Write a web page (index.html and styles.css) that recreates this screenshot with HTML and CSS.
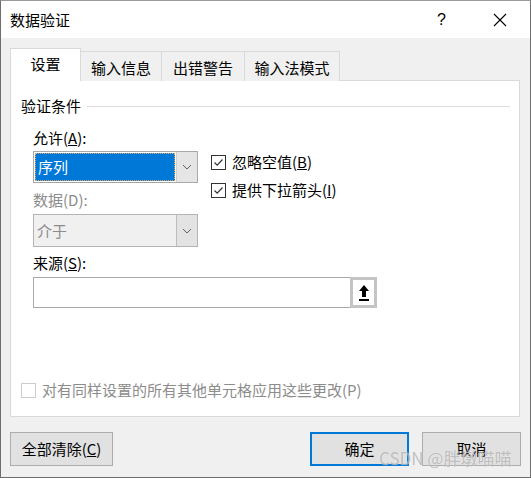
FILE: index.html
```html
<!DOCTYPE html>
<html lang="zh-CN">
<head>
<meta charset="utf-8">
<title>数据验证</title>
<link rel="stylesheet" href="styles.css">
</head>
<body>
<div class="dialog">
  <div class="titlebar">
    <span class="title">数据验证</span>
    <span class="help">?</span>
    <svg class="close" width="14" height="14" viewBox="0 0 14 14"><path d="M1 1L13 13M13 1L1 13" stroke="#000" stroke-width="1.1" fill="none"/></svg>
  </div>
  <div class="content">
    <div class="tabs">
      <div class="tab active">设置</div>
      <div class="tab">输入信息</div>
      <div class="tab">出错警告</div>
      <div class="tab">输入法模式</div>
    </div>
    <div class="panel">
      <div class="legend"><span>验证条件</span><span class="rule"></span></div>
      <div class="form">
        <div class="label">允许(<u>A</u>):</div>
        <div class="grid">
          <div class="leftcol">
            <div class="combo">
              <div class="combo-text selected"><span class="focus">序列</span></div>
              <div class="combo-btn"><svg width="10" height="6" viewBox="0 0 10 6"><path d="M1 1L5 5L9 1" stroke="#606060" fill="none"/></svg></div>
            </div>
            <div class="label disabled lbl-data">数据(D):</div>
            <div class="combo disabled-combo">
              <div class="combo-text">介于</div>
              <div class="combo-btn"><svg width="10" height="6" viewBox="0 0 10 6"><path d="M1 1L5 5L9 1" stroke="#606060" fill="none"/></svg></div>
            </div>
          </div>
          <div class="rightcol">
            <div class="check"><span class="box"><svg width="13" height="13" viewBox="0 0 13 13"><path d="M2.5 6.5L5.2 9.2L10.5 3.5" stroke="#333" stroke-width="1.2" fill="none"/></svg></span><span>忽略空值(<u>B</u>)</span></div>
            <div class="check"><span class="box"><svg width="13" height="13" viewBox="0 0 13 13"><path d="M2.5 6.5L5.2 9.2L10.5 3.5" stroke="#333" stroke-width="1.2" fill="none"/></svg></span><span>提供下拉箭头(<u>I</u>)</span></div>
          </div>
        </div>
        <div class="label lbl-src">来源(<u>S</u>):</div>
        <div class="source">
          <div class="source-input"></div>
          <div class="source-btn"><svg width="14" height="18" viewBox="0 0 14 18"><path d="M7 1L12 7H9V13H5V7H2Z" fill="#000"/><rect x="2" y="15" width="10" height="2" fill="#000"/></svg></div>
        </div>
      </div>
      <div class="check bottom-check"><span class="box box-disabled"></span><span class="disabled">对有同样设置的所有其他单元格应用这些更改(P)</span></div>
    </div>
    <div class="footer">
      <div class="btn btn-wide">全部清除(<u>C</u>)</div>
      <div class="spacer"></div>
      <div class="btn btn-default">确定</div>
      <div class="btn">取消</div>
    </div>
  </div>
  <div class="watermark">CSDN @胖墩喵喵</div>
</div>
</body>
</html>
```
FILE: styles.css
```css
* { box-sizing: border-box; }
html, body { margin: 0; padding: 0; }
body {
  font-family: "Noto Sans CJK SC", "Noto Sans", sans-serif;
  font-size: 15px;
  color: #000;
  background: #f0f0f0;
}
.dialog {
  position: relative;
  width: 531px;
  height: 478px;
  border: 1px solid #6e6e6e;
  border-top-color: #9a9a9a;
  background: #f0f0f0;
  overflow: hidden;
}
.titlebar {
  height: 37px;
  background: #fff;
  display: flex;
  align-items: center;
  padding-left: 9px;
}
.title { font-size: 15px; line-height: 20px; flex: 1; }
.help { width: 14px; margin-right: 42px; font-family: "Liberation Sans", sans-serif; font-size: 16px; }
.close { margin-right: 23px; }
.content { padding: 10px 9px 0 9px; }
.tabs { display: flex; align-items: flex-end; height: 33px; position: relative; z-index: 1; margin-bottom: -1px; }
.tab {
  height: 30px;
  border: 1px solid #d9d9d9;
  border-bottom: none;
  border-left: none;
  background: #f0f0f0;
  display: flex;
  align-items: center;
  justify-content: center;
  line-height: 20px;
  padding-top: 2px;
}
.tab:nth-child(2) { width: 81px; }
.tab:nth-child(3) { width: 83px; }
.tab:nth-child(4) { width: 95px; }
.tab.active {
  width: 71px;
  height: 33px;
  background: #fff;
  border-left: 1px solid #d9d9d9;
  padding-top: 0;
  padding-bottom: 2px;
}
.panel {
  width: 510px;
  height: 337px;
  background: #fff;
  border: 1px solid #d9d9d9;
  padding: 15px 9px 16px 10px;
  display: flex;
  flex-direction: column;
}
.legend { display: flex; align-items: center; line-height: 20px; }
.legend .rule { flex: 1; border-top: 1px solid #dcdcdc; margin-left: 6px; }
.form { padding-left: 12px; }
.label { line-height: 20px; }
.form > .label:first-child { margin-top: 12px; }
.disabled { color: #8c8c8c; }
.lbl-data { margin-top: 7px; }
.lbl-src { margin-top: 6px; }
.grid { display: grid; grid-template-columns: 165px auto; column-gap: 13px; margin-top: 3px; }
.combo {
  display: flex;
  height: 32px;
  border: 1px solid #a9a9a9;
  background: #fff;
}
.combo-text {
  flex: 1;
  margin: 1px;
  line-height: 26px;
  padding-left: 2px;
}
.combo-text.selected { background: #0078d7; color: #fff; padding: 0; }
.focus {
  display: block;
  height: 100%;
  border: 1px dotted #e0a868;
  padding-left: 2px;
  line-height: 26px;
}
.combo-btn {
  width: 21px;
  background: #e5e5e5;
  border-left: 1px solid #cfcfcf;
  display: flex;
  align-items: center;
  justify-content: center;
}
.disabled-combo { margin-top: 4px; height: 33px; background: #f0f0f0; border-color: #b4b4b4; }
.disabled-combo .combo-text { color: #8c8c8c; line-height: 29px; padding-left: 2px; }
.disabled-combo .combo-btn { background: #e3e3e3; border-left-color: #bdbdbd; }
.rightcol { padding-top: 1px; display: flex; flex-direction: column; gap: 8px; }
.check { display: flex; align-items: center; line-height: 20px; height: 20px; }
.box {
  width: 15px;
  height: 15px;
  border: 1px solid #333;
  background: #fff;
  margin-right: 6px;
  display: flex;
  align-items: center;
  justify-content: center;
}
.box-disabled { border-color: #cccccc; }
.source { display: flex; margin-top: 4px; width: 344px; height: 31px; border: 1px solid #a9a9a9; }
.source-input { flex: 1; background: #fff; }
.source-btn {
  width: 27px;
  border: 3px solid #c4c4c4;
  background: #fff;
  display: flex;
  align-items: center;
  justify-content: center;
  margin: -1px -1px -1px 0;
}
.bottom-check { margin-top: auto; padding-left: 0; }
.footer { display: flex; margin-top: 15px; gap: 13px; }
.spacer { flex: 1; }
.btn {
  width: 99px;
  height: 34px;
  background: #e1e1e1;
  border: 1px solid #adadad;
  display: flex;
  align-items: center;
  justify-content: center;
  line-height: 20px;
}
.btn-wide { width: 103px; }
.btn-default { border: 2px solid #0078d7; }
.watermark {
  position: absolute;
  left: 378px;
  top: 444px;
  font-size: 17px;
  color: rgba(140, 140, 140, 0.55);
  letter-spacing: 0;
  white-space: nowrap;
  text-shadow: 0 0 1px rgba(255,255,255,0.8);
}
```
